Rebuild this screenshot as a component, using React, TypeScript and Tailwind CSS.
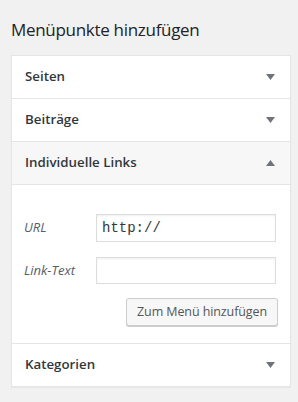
import React from 'react';

const Arrow = ({ up = false }: { up?: boolean }) => (
  <svg width="9" height="6" viewBox="0 0 9 6" className="mr-[2px]">
    {up ? <polygon points="0,6 9,6 4.5,0" fill="#6e7479" /> : <polygon points="0,0 9,0 4.5,6" fill="#6e7479" />}
  </svg>
);

const Row = ({ label, open = false }: { label: string; open?: boolean }) => (
  <div className={`h-[43px] px-[13px] flex items-center justify-between border-b border-[#e5e5e5] ${open ? 'bg-[#f7f7f7]' : 'bg-white'}`}>
    <span className="text-[13.3px] font-semibold text-[#32373c]">{label}</span>
    <Arrow up={open} />
  </div>
);

export default function App() {
  return (
    <div className="min-h-[402px] bg-[#f1f1f1] pt-[18px] font-['Open_Sans','Noto_Sans',sans-serif]">
      <h2 className="ml-[11px] text-[17px] tracking-[-0.3px] leading-[24px] text-[#1d2327] mb-[13px]">Menüpunkte hinzufügen</h2>

      <div className="ml-[11px] w-[280px] bg-white border border-[#e5e5e5] shadow-[0_1px_1px_rgba(0,0,0,0.04)]">
        <Row label="Seiten" />
        <Row label="Beiträge" />
        <Row label="Individuelle Links" open />

        <div className="pt-[29px] pb-[17px] px-[12px] border-b border-[#e5e5e5]">
          <div className="flex items-center">
            <label className="w-[72px] text-[13px] italic text-[#555d66]">URL</label>
            <input
              className="w-[180px] h-[28px] border border-[#ddd] px-[5px] text-[14px] text-[#32373c] font-['Liberation_Mono','DejaVu_Sans_Mono',monospace] shadow-[inset_0_1px_2px_rgba(0,0,0,0.07)] outline-none"
              defaultValue="http://"
            />
          </div>
          <div className="flex items-center mt-[15px]">
            <label className="w-[72px] text-[13px] italic text-[#555d66]">Link-Text</label>
            <input className="w-[180px] h-[27px] border border-[#ddd] px-[4px] text-[13px] shadow-[inset_0_1px_2px_rgba(0,0,0,0.07)] outline-none" />
          </div>
          <div className="flex justify-end mt-[14px]">
            <button className="h-[28px] px-[10px] text-[12.5px] tracking-[-0.1px] text-[#555] bg-[#f7f7f7] border border-[#ccc] rounded-[3px] shadow-[0_1px_0_#ccc]">
              Zum Menü hinzufügen
            </button>
          </div>
        </div>

        <div className="h-[42px] px-[13px] flex items-center justify-between">
          <span className="text-[13.3px] font-semibold text-[#32373c]">Kategorien</span>
          <Arrow />
        </div>
      </div>
    </div>
  );
}
